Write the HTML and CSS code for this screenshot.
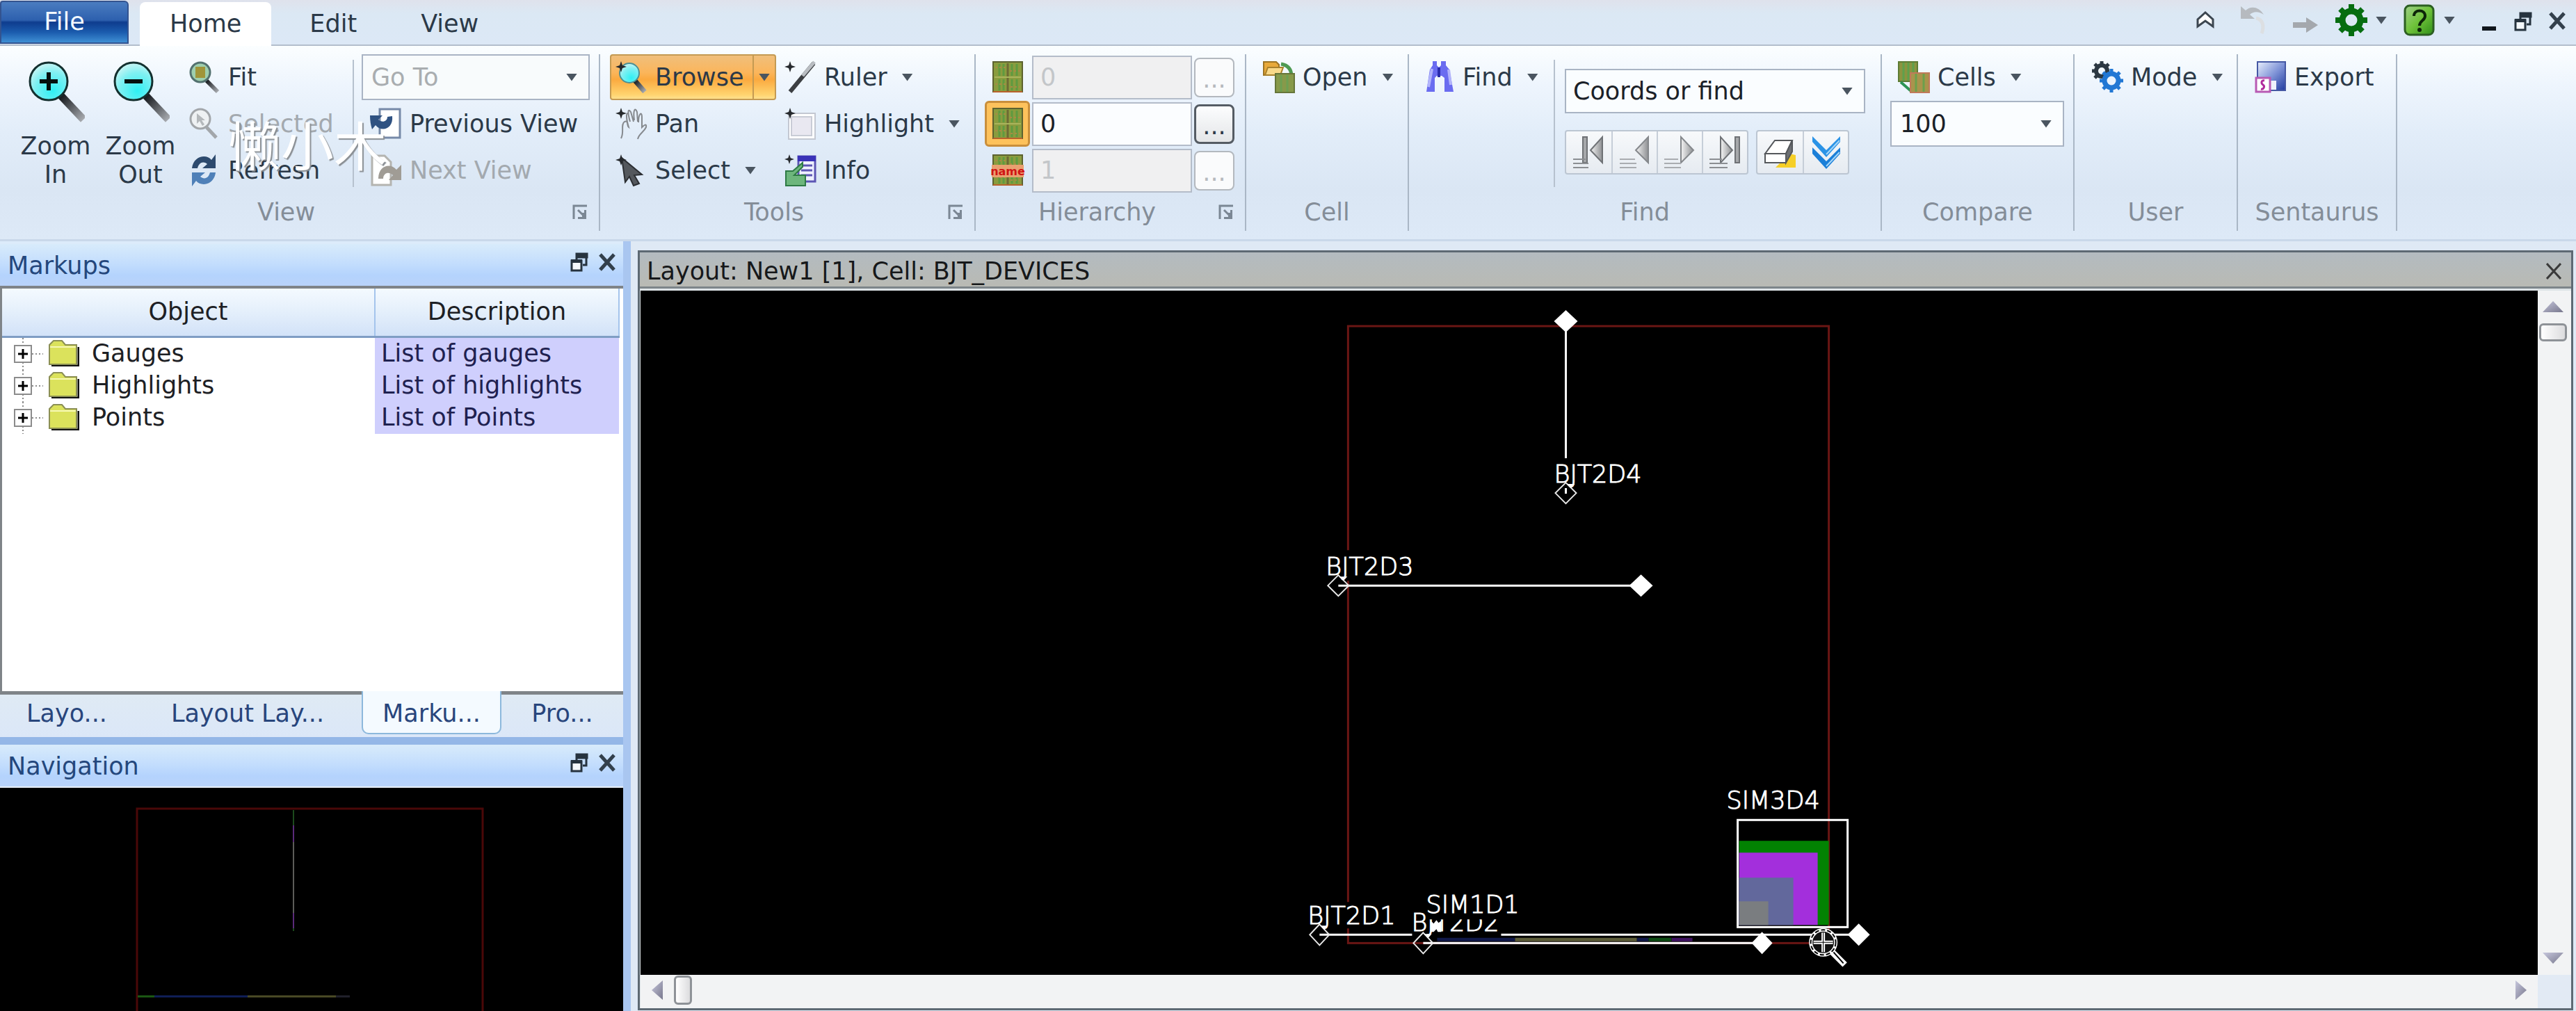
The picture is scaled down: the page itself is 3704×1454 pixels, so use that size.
FILE: index.html
```html
<!DOCTYPE html>
<html lang="en">
<head>
<meta charset="utf-8">
<title>Layout: New1 [1], Cell: BJT_DEVICES</title>
<link rel="stylesheet" href="styles.css">
</head>
<body>
<svg class="defs" aria-hidden="true">
  <defs>
    <radialGradient id="lens" cx="0.6" cy="0.75" r="0.8"><stop offset="0" stop-color="#2ff0f4"/><stop offset="0.6" stop-color="#7ff0f2"/><stop offset="1" stop-color="#d6f6f4"/></radialGradient>
    <linearGradient id="handle" x1="0" y1="0" x2="1" y2="1"><stop offset="0" stop-color="#15181c"/><stop offset="1" stop-color="#a8abb0"/></linearGradient>
    <linearGradient id="metal" x1="0" y1="0" x2="1" y2="0"><stop offset="0" stop-color="#f4f4f4"/><stop offset="1" stop-color="#8d8f92"/></linearGradient>
    <linearGradient id="disk" x1="0" y1="0" x2="1" y2="1"><stop offset="0" stop-color="#e8eefc"/><stop offset="0.5" stop-color="#8296d8"/><stop offset="1" stop-color="#1f3aa0"/></linearGradient>
    <linearGradient id="helpfill" x1="0" y1="0" x2="1" y2="1"><stop offset="0" stop-color="#9fd08a"/><stop offset="0.5" stop-color="#6fc23a"/><stop offset="1" stop-color="#2f8f18"/></linearGradient>
    <linearGradient id="scrollfill" x1="0" y1="0" x2="1" y2="1"><stop offset="0" stop-color="#c6c6dc"/><stop offset="1" stop-color="#77778c"/></linearGradient>
    <symbol id="star" viewBox="0 0 16 16"><path d="M8 0l2 6 6 2-6 2-2 6-2-6-6-2 6-2z" fill="#26292d"/></symbol>
    <symbol id="i-cell" viewBox="0 0 46 46">
      <rect x="2" y="1" width="42" height="43" fill="#8a9c3e" stroke="#5c6230" stroke-width="2"/>
      <path d="M11 4v17M17 4v17M29 4v17M36 4v17M11 26v16M17 26v16M29 26v16M36 26v16" stroke="#5f9a40" stroke-width="3"/>
      <path d="M23 3v40" stroke="#6d6a34" stroke-width="3"/><path d="M4 23h38" stroke="#a9b45c" stroke-width="2"/>
      <path d="M5 9h16M26 14h15M5 33h15M27 37h14" stroke="#a88a45" stroke-width="2" stroke-dasharray="3 3"/>
      <path d="M2 44h42" stroke="#b8622c" stroke-width="2"/>
    </symbol>
    <symbol id="i-restore" viewBox="0 0 26 28">
      <path d="M9 2h15v5H9zM9 7v3M23 7v11h-5" stroke="#26333f" stroke-width="3" fill="#26333f" fill-opacity="0"/>
      <path d="M8 1h17v6H8z" fill="#26333f"/><path d="M2 12h14v14H2z" fill="#f4f8fc" stroke="#26333f" stroke-width="3"/><path d="M1 10h16v5H1z" fill="#26333f"/>
    </symbol>
    <symbol id="i-close" viewBox="0 0 26 26"><path d="M3 2l20 22M23 2L3 24" stroke="#33404c" stroke-width="5"/></symbol>
    <symbol id="i-launch" viewBox="0 0 22 22"><path d="M2 21V2h19" stroke="#7b8794" stroke-width="3" fill="none"/><path d="M8 8l8 8" stroke="#7b8794" stroke-width="3"/><path d="M20 8v13H8v-3h6v-6h3V8z" fill="#7b8794"/></symbol>
    <symbol id="i-folder" viewBox="0 0 44 38">
      <path d="M4 37h39V10" fill="none" stroke="#111" stroke-width="3"/>
      <path d="M1 35V7l6-6h12l5 6h16v28z" fill="#dbe25c" stroke="#8b8f55" stroke-width="2"/>
      <path d="M2 10h37" stroke="#f6f8b4" stroke-width="2"/>
    </symbol>
    <symbol id="i-plus" viewBox="0 0 46 46"><path d="M17 0v46M30 23h16" stroke="#8c8c8c" stroke-width="2" stroke-dasharray="2 3"/><rect x="5" y="11" width="24" height="24" fill="#fff" stroke="#8c8c8c" stroke-width="2"/><path d="M10 23h14M17 16v14" stroke="#000" stroke-width="3"/></symbol>
  </defs>
</svg>

<header class="topbar">
  <button class="file-btn" type="button">File</button>
  <nav class="tabs" aria-label="Ribbon tabs">
    <button class="tab tab-active" type="button">Home</button>
    <button class="tab" type="button">Edit</button>
    <button class="tab" type="button">View</button>
  </nav>
  <div class="quick">
    <button class="icon-btn" type="button" aria-label="Collapse ribbon"><svg class="ico" viewBox="0 0 46 46"><path d="M12 32V22L23 12l11 10v10l-11-8z" fill="#fff" stroke="#3c4650" stroke-width="3"/></svg></button>
    <button class="icon-btn" type="button" aria-label="Undo"><svg class="ico" viewBox="0 0 46 46"><path d="M4 3v18h20l-7-6c6-6 14-4 20 0C30 3 18 2 11 9z" fill="#b6babf"/><path d="M26 20c10 2 12 12 8 22" fill="none" stroke="#dcdfe2" stroke-width="5"/></svg></button>
    <button class="icon-btn" type="button" aria-label="Redo"><svg class="ico" viewBox="0 0 46 46"><path d="M9 26h19v-7l17 11-17 11v-7H9z" fill="#a4a8ad"/></svg></button>
    <div class="quick-split">
      <button class="icon-btn" type="button" aria-label="Settings"><svg class="ico" viewBox="0 0 46 46"><circle cx="23" cy="23" r="13" fill="none" stroke="#066d10" stroke-width="9"/><path d="M23 0v10M23 36v10M0 23h10M36 23h10M7 7l7 7M32 32l7 7M39 7l-7 7M14 32l-7 7" stroke="#066d10" stroke-width="8"/></svg></button>
      <span class="arrow"></span>
    </div>
    <div class="quick-split">
      <button class="icon-btn" type="button" aria-label="Help"><svg class="ico" viewBox="0 0 46 46"><rect x="2" y="2" width="41" height="42" rx="7" fill="url(#helpfill)" stroke="#2c5f22" stroke-width="3"/><path d="M15 17c0-10 16-10 16 0 0 7-8 6-8 14" fill="none" stroke="#0d2609" stroke-width="4"/><circle cx="23" cy="37" r="3" fill="#0d2609"/></svg></button>
      <span class="arrow"></span>
    </div>
    <div class="win-controls">
      <button class="win-btn" type="button" aria-label="Minimize"><svg width="22" height="28" viewBox="0 0 22 28"><rect x="1" y="21" width="20" height="6" fill="#10161c"/></svg></button>
      <button class="win-btn" type="button" aria-label="Restore"><svg width="26" height="28"><use href="#i-restore"/></svg></button>
      <button class="win-btn" type="button" aria-label="Close"><svg width="26" height="26"><use href="#i-close"/></svg></button>
    </div>
  </div>
</header>

<section class="ribbon" aria-label="Home">
  <div class="group g-view">
    <div class="group-body">
      <button class="big-btn" type="button"><svg width="84" height="90" viewBox="0 0 84 90"><path d="M50 50l32 34" stroke="url(#handle)" stroke-width="11"/><circle cx="32" cy="29" r="27" fill="url(#lens)" stroke="#14302f" stroke-width="3"/><path d="M19 29h26M32 16v26" stroke="#06110f" stroke-width="6"/></svg><span>Zoom<br>In</span></button>
      <button class="big-btn" type="button"><svg width="84" height="90" viewBox="0 0 84 90"><path d="M50 50l32 34" stroke="url(#handle)" stroke-width="11"/><circle cx="32" cy="29" r="27" fill="url(#lens)" stroke="#14302f" stroke-width="3"/><path d="M19 29h26" stroke="#06110f" stroke-width="6"/></svg><span>Zoom<br>Out</span></button>
      <div class="col col-fit">
        <button class="btn" type="button"><svg class="ico" viewBox="0 0 46 46"><path d="M26 28l16 16" stroke="url(#handle)" stroke-width="6"/><circle cx="17" cy="16" r="14" fill="#9ecfae" stroke="#53716f" stroke-width="3"/><rect x="10" y="8" width="14" height="16" fill="#a0953a"/></svg>Fit</button>
        <button class="btn" type="button" disabled><svg class="ico" viewBox="0 0 46 46"><path d="M26 28l14 15" stroke="#a2a6aa" stroke-width="5"/><circle cx="17" cy="16" r="14" fill="#eef1f3" stroke="#a2a6aa" stroke-width="3"/><path d="M12 8v15l4-4 4 7 3-2-4-6h5z" fill="#b4b8bb"/></svg>Selected</button>
        <button class="btn" type="button"><svg class="ico" viewBox="0 0 46 46"><path d="M5 20C7 2 26-1 33 8l6-8v20H20l7-6c-6-5-12-2-14 6z" fill="#2d4a6e"/><path d="M39 26c-2 18-21 21-28 12l-6 8V26h19l-7 6c6 5 12 2 14-6z" fill="#4f80b8"/></svg>Refresh</button>
      </div>
      <div class="col col-history">
        <div class="combo"><select aria-label="Go To" disabled><option>Go To</option></select><span class="arrow"></span></div>
        <button class="btn" type="button"><svg class="ico" viewBox="0 0 46 46"><path d="M14 2h29v41H14z" fill="#fff" stroke="#7689a8" stroke-width="3"/><path d="M0 11h18l-6 6c5 5 13 3 13-4l7-1c2 18-15 24-24 13l-5 6C1 25 0 18 0 11z" fill="#2f5282"/></svg>Previous View</button>
        <button class="btn" type="button" disabled><svg class="ico" viewBox="0 0 46 46"><path d="M3 2h18l9 9v33H3z" fill="#fff" stroke="#b4b4b0" stroke-width="3"/><path d="M12 35c0-18 16-24 26-13l7-7v22H27l6-7c-6-6-14-3-14 5z" fill="#a09c95"/></svg>Next View</button>
      </div>
    </div>
    <div class="group-foot"><span>View</span><button class="launch" type="button" aria-label="View options"><svg width="22" height="22"><use href="#i-launch"/></svg></button></div>
  </div>

  <div class="group g-tools">
    <div class="group-body">
      <div class="col col-tools">
        <div class="split">
          <button class="btn split-main" type="button"><svg class="ico" viewBox="0 0 46 46"><path d="M28 28l14 16" stroke="url(#handle)" stroke-width="7"/><circle cx="20" cy="17" r="14" fill="url(#lens)" stroke="#4c8f94" stroke-width="2"/><use href="#star" width="16" height="16"/></svg>Browse</button>
          <button class="split-arrow" type="button" aria-label="Browse options"><span class="arrow"></span></button>
        </div>
        <button class="btn" type="button"><svg class="ico" viewBox="0 0 46 46"><g fill="none" stroke="#85898e" stroke-width="2"><path d="M8 44c5-9-1-20 5-24 6-3 3 6 6 8-3-10-5-22 0-20M21 20c-4-14-3-20 1-14l4 14M27 18c-2-14 1-20 4-12l1 14M33 21c0-13 5-16 5-8v15c3-3 7-6 6 0-4 8-10 9-12 17"/></g><use href="#star" width="16" height="16"/></svg>Pan</button>
        <button class="btn" type="button"><svg class="ico" viewBox="0 0 46 46"><path d="M9 5l29 24-11 1 7 12-8 3-6-13-6 8z" fill="#54585d" stroke="#2b2e32" stroke-width="2"/><use href="#star" width="16" height="16"/></svg>Select<span class="arrow"></span></button>
      </div>
      <div class="col">
        <button class="btn" type="button"><svg class="ico" viewBox="0 0 46 46"><path d="M8 44L42 3" stroke="#3c3f43" stroke-width="6"/><path d="M26 21L43 1" stroke="#b9bdc2" stroke-width="5"/><use href="#star" width="16" height="16"/></svg>Ruler<span class="arrow"></span></button>
        <button class="btn" type="button"><svg class="ico" viewBox="0 0 46 46"><path d="M6 8h38v37H6z" fill="#fff" stroke="#c3c8d2" stroke-width="2"/><path d="M10 13h29v27H10z" fill="#e9e8f1" stroke="#c9ccd6" stroke-width="2"/><use href="#star" width="16" height="16"/></svg>Highlight<span class="arrow"></span></button>
        <button class="btn" type="button"><svg class="ico" viewBox="0 0 46 46"><path d="M20 3h24v36H20z" fill="#eef0ff" stroke="#5d56b4" stroke-width="3"/><path d="M19 2h26v8H19z" fill="#3a32b8"/><path d="M24 16h16M24 23h16M24 30h16" stroke="#5d56b4" stroke-width="3"/><path d="M2 24h10l14-12v6L14 30h16v15H2z" fill="#6db67c" stroke="#2e7a45" stroke-width="2"/><use href="#star" width="14" height="14"/></svg>Info</button>
      </div>
    </div>
    <div class="group-foot"><span>Tools</span><button class="launch" type="button" aria-label="Tools options"><svg width="22" height="22"><use href="#i-launch"/></svg></button></div>
  </div>

  <div class="group g-hier">
    <div class="group-body">
      <div class="levels">
        <button class="toggle" type="button" aria-label="From level"><svg class="ico"><use href="#i-cell"/></svg></button>
        <input type="text" value="0" aria-label="From level value" disabled>
        <button class="dots" type="button" disabled>...</button>
        <button class="toggle toggle-on" type="button" aria-label="To level"><svg class="ico"><use href="#i-cell"/></svg></button>
        <input type="text" value="0" aria-label="To level value">
        <button class="dots" type="button">...</button>
        <button class="toggle" type="button" aria-label="Name level"><svg class="ico" viewBox="0 0 46 46"><use href="#i-cell"/><rect y="15" width="46" height="18" fill="#e9a070"/><text class="name-tag" x="23" y="30">name</text></svg></button>
        <input type="text" value="1" aria-label="Name level value" disabled>
        <button class="dots" type="button" disabled>...</button>
      </div>
    </div>
    <div class="group-foot"><span>Hierarchy</span><button class="launch" type="button" aria-label="Hierarchy options"><svg width="22" height="22"><use href="#i-launch"/></svg></button></div>
  </div>

  <div class="group g-cell">
    <div class="group-body">
      <div class="col"><button class="btn" type="button"><svg class="ico" viewBox="0 0 46 46"><path d="M1 1h18l4 4v15H1z" fill="#e8a93a" stroke="#9d7424" stroke-width="2"/><path d="M7 9h22l-4 11H3z" fill="#f9d98a" stroke="#a9812c" stroke-width="2"/><path d="M26 4c12 2 15 10 15 18" fill="none" stroke="#4e9a52" stroke-width="5"/><path d="M18 18h27v27H18z" fill="#87994a" stroke="#66763a" stroke-width="2"/><path d="M26 20v24M35 20v24" stroke="#6da052" stroke-width="3"/></svg>Open<span class="arrow"></span></button></div>
    </div>
    <div class="group-foot"><span>Cell</span></div>
  </div>

  <div class="group g-find">
    <div class="group-body">
      <div class="col col-find"><button class="btn" type="button"><svg class="ico" viewBox="0 0 46 46"><path d="M14 0h6v6l3 3 3-3V0h7v6l5 6 6 32H31V24l-4-3h-7l-3 3v20H5l5-32 4-6z" fill="#6a6cf0"/><path d="M13 11l-5 26M37 12l3 22" stroke="#b2b4fb" stroke-width="4"/><path d="M23 9v14" stroke="#2a2cae" stroke-width="4"/></svg>Find<span class="arrow"></span></button></div>
      <div class="col col-search">
        <div class="combo combo-search"><select aria-label="Coords or find"><option>Coords or find</option></select><span class="arrow"></span></div>
        <div class="stepper">
          <div class="step-set">
            <button class="step" type="button" aria-label="First"><svg width="50" height="50" viewBox="0 0 50 50"><path d="M44 3v37L27 22z" fill="url(#metal)" stroke="#6f7276" stroke-width="2"/><path d="M16 3h6v37h-6z" fill="#a6a8ab" stroke="#6f7276" stroke-width="2"/><path d="M2 35h18M2 41h22M2 47h22" stroke="#8b8e92" stroke-width="2"/></svg></button>
            <button class="step" type="button" aria-label="Previous"><svg width="50" height="50" viewBox="0 0 50 50"><path d="M44 3v37L26 22z" fill="url(#metal)" stroke="#85888c" stroke-width="2"/><path d="M3 35h22M3 41h24M3 47h24" stroke="#a9acb0" stroke-width="2"/></svg></button>
            <button class="step" type="button" aria-label="Next"><svg width="50" height="50" viewBox="0 0 50 50"><path d="M26 3v37l18-18z" fill="url(#metal)" stroke="#85888c" stroke-width="2"/><path d="M2 35h20M2 41h24M2 47h24" stroke="#a9acb0" stroke-width="2"/></svg></button>
            <button class="step" type="button" aria-label="Last"><svg width="50" height="50" viewBox="0 0 50 50"><path d="M18 3v37l17-18z" fill="url(#metal)" stroke="#6f7276" stroke-width="2"/><path d="M39 3h6v37h-6z" fill="#a6a8ab" stroke="#6f7276" stroke-width="2"/><path d="M2 35h18M2 41h26M2 47h26" stroke="#8b8e92" stroke-width="2"/></svg></button>
          </div>
          <div class="step-set">
            <button class="step" type="button" aria-label="Clear"><svg width="50" height="50" viewBox="0 0 50 50"><path d="M18 47h29V29l-9-2z" fill="#f6cf28"/><path d="M3 27L17 8h25L33 27z" fill="#fff" stroke="#55585c" stroke-width="2"/><path d="M42 8v16L33 40V27z" fill="#6d7074" stroke="#55585c" stroke-width="2"/><path d="M3 27h30v13H3z" fill="#fff" stroke="#55585c" stroke-width="2"/></svg></button>
            <button class="step" type="button" aria-label="Show results"><svg width="50" height="50" viewBox="0 0 50 50"><path d="M5 2l20 20L45 2v8L25 32 5 10z" fill="#2b93e6"/><path d="M5 18l20 20 20-20v9L25 49 5 27z" fill="#1b7fd8"/><path d="M44 8L25 28M44 25L25 45" stroke="#a6d6f8" stroke-width="2"/></svg></button>
          </div>
        </div>
      </div>
    </div>
    <div class="group-foot"><span>Find</span></div>
  </div>

  <div class="group g-compare">
    <div class="group-body">
      <div class="col">
        <button class="btn" type="button"><svg class="ico" viewBox="0 0 46 46"><path d="M1 1h27v28H1z" fill="#8b9440" stroke="#5d7c35" stroke-width="2"/><path d="M8 2v26M15 2v26M22 2v26" stroke="#5fa04c" stroke-width="3"/><path d="M4 30l16 14" stroke="#2d9455" stroke-width="4"/><path d="M18 17h27v28H18z" fill="#a8944c" stroke="#c0795a" stroke-width="2"/><path d="M26 18v26M37 18v26" stroke="#6ba04c" stroke-width="3"/></svg>Cells<span class="arrow"></span></button>
        <div class="combo combo-compare"><select aria-label="Compare count"><option>100</option></select><span class="arrow"></span></div>
      </div>
    </div>
    <div class="group-foot"><span>Compare</span></div>
  </div>

  <div class="group g-user">
    <div class="group-body">
      <div class="col"><button class="btn" type="button"><svg class="ico" viewBox="0 0 46 46"><circle cx="15" cy="14" r="8" fill="none" stroke="#2c3842" stroke-width="6"/><path d="M15 0v5M1 14h5M5 4l4 4M25 4l-4 4M5 24l4-4" stroke="#2c3842" stroke-width="5"/><circle cx="29" cy="28" r="10" fill="#eaf3fd" stroke="#2177d4" stroke-width="7"/><path d="M29 11v6M29 39v6M12 28h6M40 28h6M17 16l4 4M37 36l4 4M41 16l-4 4M21 36l-4 4" stroke="#2177d4" stroke-width="5"/></svg>Mode<span class="arrow"></span></button></div>
    </div>
    <div class="group-foot"><span>User</span></div>
  </div>

  <div class="group g-sentaurus">
    <div class="group-body">
      <div class="col"><button class="btn" type="button"><svg class="ico" viewBox="0 0 46 46"><path d="M4 1h40v41H4z" fill="url(#disk)" stroke="#4558a4" stroke-width="2"/><path d="M22 28h9v13h-9z" fill="#eef2fb"/><path d="M2 24h20v20H2z" fill="#fff" stroke="#b85ab4" stroke-width="3"/><path d="M14 28c-5-1-5 4-2 6s1 7-3 6" fill="none" stroke="#b02a9c" stroke-width="3"/></svg>Export</button></div>
    </div>
    <div class="group-foot"><span>Sentaurus</span></div>
  </div>
</section>

<main class="workspace">
  <aside class="dock">
    <section class="panel panel-markups">
      <div class="panel-title"><h2>Markups</h2>
        <div class="panel-btns"><button type="button" aria-label="Float"><svg width="26" height="28"><use href="#i-restore"/></svg></button><button type="button" aria-label="Close"><svg width="26" height="26"><use href="#i-close"/></svg></button></div>
      </div>
      <div class="tree">
        <table>
          <thead><tr><th class="c-object">Object</th><th>Description</th></tr></thead>
          <tbody>
            <tr><td><div class="node"><svg width="46" height="46"><use href="#i-plus"/></svg><svg class="folder" width="44" height="38"><use href="#i-folder"/></svg>Gauges</div></td><td class="desc">List of gauges</td></tr>
            <tr><td><div class="node"><svg width="46" height="46"><use href="#i-plus"/></svg><svg class="folder" width="44" height="38"><use href="#i-folder"/></svg>Highlights</div></td><td class="desc">List of highlights</td></tr>
            <tr><td><div class="node"><svg width="46" height="46"><use href="#i-plus"/></svg><svg class="folder" width="44" height="38"><use href="#i-folder"/></svg>Points</div></td><td class="desc">List of Points</td></tr>
          </tbody>
        </table>
      </div>
      <div class="dock-tabs">
        <button class="dock-tab" type="button">Layo...</button>
        <button class="dock-tab" type="button">Layout Lay...</button>
        <button class="dock-tab dock-tab-active" type="button">Marku...</button>
        <button class="dock-tab" type="button">Pro...</button>
      </div>
    </section>
    <section class="panel panel-nav">
      <div class="panel-title"><h2>Navigation</h2>
        <div class="panel-btns"><button type="button" aria-label="Float"><svg width="26" height="28"><use href="#i-restore"/></svg></button><button type="button" aria-label="Close"><svg width="26" height="26"><use href="#i-close"/></svg></button></div>
      </div>
      <svg class="overview">
        <path d="M197 400V30h497v370" fill="none" stroke="#4a0808" stroke-width="3"/>
        <path d="M422 32v22" stroke="#1c4a1c" stroke-width="2"/><path d="M422 54v24M422 180v22" stroke="#5a2a7a" stroke-width="2"/><path d="M422 78v102" stroke="#5c5c58" stroke-width="2"/><path d="M422 202v4" stroke="#1c4a1c" stroke-width="2"/>
        <path d="M198 300h24" stroke="#1c5a14" stroke-width="3"/><path d="M222 300h134" stroke="#10205a" stroke-width="3"/><path d="M356 300h127" stroke="#4c4c26" stroke-width="3"/><path d="M483 300h20" stroke="#22222c" stroke-width="3"/>
      </svg>
    </section>
  </aside>

  <section class="document">
    <div class="doc-title"><h1>Layout: New1 [1], Cell: BJT_DEVICES</h1><button type="button" aria-label="Close layout"><svg width="22" height="26" viewBox="0 0 22 26"><path d="M1 2l20 22M21 2L1 24" stroke="#3a3a3a" stroke-width="3"/></svg></button></div>
    <div class="doc-body">
      <svg class="canvas" viewBox="921 418 2727 983" preserveAspectRatio="xMinYMin">
        <rect x="1938" y="469" width="691" height="887" fill="none" stroke="#6a1614" stroke-width="3"/>
        <g>
          <path d="M2500 1209h129v121h-129z" fill="#028202"/><path d="M2500 1226h113v104h-113z" fill="#a32fdc"/><path d="M2500 1262h78v68h-78z" fill="#62689c"/><path d="M2500 1296h42v34h-42z" fill="#7a7d80"/>
          <rect x="2498" y="1179" width="158" height="154" fill="none" stroke="#fff" stroke-width="3"/>
        </g>
        <path d="M2066 1351h112M2353 1351h17" stroke="#101848" stroke-width="5"/><path d="M2178 1351h175" stroke="#5c5c38" stroke-width="5"/><path d="M2370 1351h33" stroke="#0c4a12" stroke-width="5"/><path d="M2403 1351h30" stroke="#3f1260" stroke-width="5"/>
        <g stroke="#fff" fill="none" stroke-width="3">
          <path d="M2251 463v196M2251 702v8"/>
          <path d="M1924 842h435"/>
          <path d="M1897 1344h133M2158 1344h514"/>
          <path d="M2046 1356h487"/>
        </g>
        <g class="mask"><path d="M2234 659h128v38h-128zM1907 791h126v44h-126zM1881 1297h124v38h-124zM2030 1311h130v30h-130z"/></g>
        <text class="mark" x="2234" y="694">BJT2D4</text>
        <text class="mark" x="1906" y="827">BJT2D3</text>
        <text class="mark" x="1880" y="1329">BJT2D1</text>
        <text class="mark" x="2029" y="1339">BJT2D2</text>
        <path class="mask" d="M2050 1280h132v42h-132z"/>
        <text class="mark" x="2050" y="1313">SIM1D1</text>
        <text class="mark" x="2482" y="1163">SIM3D4</text>
        <path d="M2057 1324l4 4 4-5 3 4 4-3v16h-5l-2-4-4 4h-4z" fill="#fff"/>
        <g fill="#fff"><path d="M2251 446l17 16-17 16-17-16zM2359 826l17 16-17 16-17-16zM2672 1328l16 16-16 16-16-16zM2533 1340l15 16-15 16-15-16z"/></g>
        <g fill="none" stroke="#e8e8e8" stroke-width="2"><path d="M2251 694l15 15-15 15-15-15zM1924 827l15 15-15 15-15-15zM1897 1329l14 15-14 15-14-15zM2046 1341l14 15-14 15-14-15z"/></g>
        <path d="M2252 696h12l-6 6zM1925 829h12l-6 6zM1898 1331h11l-5 6zM2047 1343h11l-5 6z" fill="#fff"/>
        <g fill="none">
          <path d="M2634 1369l18 18" stroke="#fff" stroke-width="9"/><path d="M2634 1367l16 18" stroke="#000" stroke-width="2"/>
          <circle cx="2621" cy="1355" r="18" fill="#111" stroke="#fff" stroke-width="5"/><circle cx="2621" cy="1355" r="18" stroke="#000" stroke-width="2" stroke-dasharray="6 3"/>
          <path d="M2607 1355h28M2621 1341v28" stroke="#fff" stroke-width="5"/><path d="M2607 1355h28M2621 1341v28" stroke="#000" stroke-width="1"/>
        </g>
      </svg>
      <div class="scroll scroll-v">
        <button type="button" aria-label="Scroll up"><svg width="30" height="16" viewBox="0 0 30 16"><path d="M15 0l15 16H0z" fill="url(#scrollfill)"/></svg></button>
        <div class="thumb"></div>
        <button class="scroll-end" type="button" aria-label="Scroll down"><svg width="30" height="16" viewBox="0 0 30 16"><path d="M0 0h30L15 16z" fill="url(#scrollfill)"/></svg></button>
      </div>
      <div class="scroll scroll-h">
        <button type="button" aria-label="Scroll left"><svg width="16" height="28" viewBox="0 0 16 28"><path d="M16 0v28L0 14z" fill="url(#scrollfill)"/></svg></button>
        <div class="thumb"></div>
        <button class="scroll-end" type="button" aria-label="Scroll right"><svg width="16" height="28" viewBox="0 0 16 28"><path d="M0 0v28l16-14z" fill="url(#scrollfill)"/></svg></button>
      </div>
      <div class="scroll-corner"></div>
    </div>
  </section>
</main>
<div class="watermark" lang="zh">懒小木</div>
</body>
</html>
```
FILE: styles.css
```css
* { box-sizing: border-box; }

body {
  margin: 0;
  min-height: 100vh;
  display: flex;
  flex-direction: column;
  position: relative;
  background: #dfe9f5;
  color: #2b3948;
  font-family: "DejaVu Sans", Verdana, sans-serif;
  font-size: 35px;
  line-height: 41px;
}

button, input, select {
  margin: 0;
  padding: 0;
  border: 0;
  background: none;
  font: inherit;
  color: inherit;
}

h1, h2 { margin: 0; font-size: inherit; font-weight: normal; }
svg { display: block; flex: none; }
.defs { position: absolute; width: 0; height: 0; }
.ico { width: 46px; height: 46px; overflow: visible; }

.arrow {
  width: 16px;
  height: 11px;
  background: #4a5560;
  clip-path: polygon(0 0, 100% 0, 50% 100%);
}

/* Top bar */
.topbar {
  display: flex;
  height: 66px;
  background: linear-gradient(#dfe2ec, #dbe8f4 30%, #dce8f6);
  border-bottom: 2px solid #b3becc;
}
.file-btn {
  width: 185px;
  height: 62px;
  margin-top: 1px;
  padding-bottom: 2px;
  border: 2px solid #33538f;
  border-radius: 4px 6px 0 0;
  background: linear-gradient(#4a7cc0, #2d60ae 45%, #0e3c8e 50%, #1b5cae 75%, #3f8fd4);
  color: #f2f8ff;
}
.tabs { display: flex; margin-left: 16px; }
.tab { padding: 4px 46px 0; }
.tab-active {
  margin: 3px 9px -2px 0;
  padding: 2px 43px 2px;
  border-radius: 8px 8px 0 0;
  background: #fff;
}
.quick {
  display: flex;
  align-items: flex-start;
  gap: 24px;
  margin-left: auto;
  padding: 6px 3px 0 0;
}
.icon-btn { width: 46px; height: 46px; }
.quick-split { display: flex; align-items: center; gap: 12px; }
.win-controls { display: flex; }
.win-btn { display: flex; justify-content: center; width: 49px; padding-top: 11px; }

/* Ribbon */
.ribbon {
  display: flex;
  padding: 12px 0;
  background: linear-gradient(#fbfeff, #eef5fd 20%, #e2edf9 45%, #dae6f4 75%, #dde9f7);
  border-bottom: 3px solid #c9d8ea;
}
.group {
  flex: none;
  display: flex;
  flex-direction: column;
  border-right: 2px solid #aab7c6;
}
.group-body { display: flex; height: 200px; }
.group-foot {
  display: flex;
  align-items: center;
  height: 54px;
  color: #848d98;
}
.group-foot span { flex: 1; text-align: center; }
.launch { width: 38px; }
.g-view { width: 863px; }
.g-tools { width: 540px; }
.g-hier { width: 389px; }
.g-cell { width: 234px; }
.g-find { width: 680px; }
.g-compare { width: 277px; }
.g-user { width: 235px; }
.g-sentaurus { width: 229px; }
.g-view .group-body { padding-left: 19px; }
.g-tools .group-body { padding-left: 14px; gap: 4px; }
.g-hier .group-body { padding-left: 13px; }
.g-cell .group-body, .g-user .group-body, .g-sentaurus .group-body { padding-left: 16px; }
.g-find .group-body, .g-compare .group-body { padding-left: 12px; }

.big-btn {
  display: flex;
  flex-direction: column;
  align-items: center;
  gap: 12px;
  width: 122px;
  padding-top: 10px;
}
.col { display: flex; flex-direction: column; gap: 1px; }
.btn {
  display: flex;
  align-items: center;
  gap: 11px;
  height: 66px;
  padding: 0 8px;
  white-space: nowrap;
}
.btn .arrow { margin-left: 10px; }
.btn:disabled { color: #a3a9af; }
.col-fit { width: 246px; }
.col-history { margin-left: 11px; width: 328px; }
.col-history .btn { padding-left: 12px; }
.col-tools { width: 239px; }

.split {
  display: flex;
  height: 66px;
  border: 2px solid #c49a52;
  border-radius: 4px;
  background: linear-gradient(#f0bf7c, #fbb55a 40%, #fba93f 55%, #ffd36e 90%, #ffe08c);
}
.split-main { flex: 1; height: 62px; padding: 0 6px; }
.split-arrow {
  display: flex;
  align-items: center;
  justify-content: center;
  width: 32px;
  border-left: 2px solid #c49a52;
}

.combo { display: grid; align-items: center; }
.combo > * { grid-area: 1 / 1; }
.combo select {
  appearance: none;
  width: 100%;
  height: 66px;
  padding: 0 12px;
  border: 2px solid #a9b4c4;
  background: #fafdff;
  color: #1b2128;
}
.combo select:disabled { color: #a9adb0; background: #f8fbfc; opacity: 1; }
.combo .arrow { justify-self: end; margin-right: 18px; pointer-events: none; }
.combo-compare { width: 250px; }
.g-compare .btn { padding-left: 11px; }
.combo-search select { height: 64px; padding: 0 10px; }

.levels {
  display: grid;
  grid-template-columns: 65px 230px 58px;
  grid-auto-rows: 66px;
  gap: 1px 3px;
  align-items: center;
}
.toggle { display: grid; place-items: center; height: 66px; border-radius: 6px; }
.toggle-on { border: 3px solid #c98f3c; background: #fdc25c; }
.levels input {
  width: 230px;
  height: 63px;
  padding: 0 10px;
  border: 2px solid #b4bcc9;
  background: #fbfdff;
  color: #1b2128;
}
.levels input:disabled { background: #f0f0f1; color: #c3c6c9; }
.dots {
  height: 57px;
  padding-top: 6px;
  border: 3px solid #555c64;
  border-radius: 8px;
  background: linear-gradient(#fcfdfe, #e4e6e8);
}
.dots:disabled { border: 2px solid #b3b8be; background: #fafbfc; color: #b5b9bd; }
.name-tag { font-size: 16px; font-weight: bold; fill: #d01414; text-anchor: middle; }

.col-find { width: 198px; }
.col-search { gap: 24px; width: 446px; padding: 21px 0 0 14px; }
.col-fit, .col-find {
  border: solid #b6c1ce;
  border-width: 0 2px 0 0;
  border-image: linear-gradient(#0000 9px, #b6c1ce 9px, #b6c1ce 190px, #0000 190px) 1;
}
.stepper { display: flex; gap: 11px; }
.step-set {
  display: flex;
  height: 64px;
  border: 2px solid #bcc6d2;
  border-radius: 4px;
  background: linear-gradient(#f7f9fb, #e6ebf1);
}
.step { display: grid; place-items: center; width: 65px; }
.step + .step { border-left: 2px solid #c6ced8; }

/* Workspace */
.workspace { flex: 1; display: flex; }
.dock {
  width: 907px;
  flex: none;
  display: flex;
  flex-direction: column;
  border-right: 11px solid #a9c6f0;
}
.panel { display: flex; flex-direction: column; }
.panel-markups { flex: 1; padding-top: 4px; border-bottom: 11px solid #94b7e7; background: #dcebfa; }
.panel-title {
  display: flex;
  align-items: center;
  justify-content: space-between;
  height: 60px;
  padding: 3px 10px 0 11px;
  background: linear-gradient(#d8ebfb, #c4defd 45%, #b4d3fd 75%, #b9d3fa);
  color: #24477c;
}
.panel-btns { display: flex; align-items: center; gap: 14px; padding-bottom: 12px; }
.tree {
  flex: 1;
  border: solid #7f8488;
  border-width: 4px 0 5px 3px;
  padding-right: 5px;
  background: #fff;
}
.tree table { width: 100%; border-collapse: collapse; table-layout: fixed; color: #1d2024; }
.tree th {
  height: 69px;
  padding: 0;
  border-bottom: 3px solid #7f9dc4;
  border-right: 2px solid #a4c4ec;
  background: linear-gradient(#f4faff, #e4effb 50%, #d2e2f8);
  font-weight: normal;
}
.c-object { width: 536px; }
.tree td { height: 46px; padding: 0; white-space: nowrap; }
.tree .desc { padding-left: 9px; background: #cfcffd; color: #1f2150; }
.node { display: flex; align-items: center; height: 46px; padding-left: 13px; }
.folder { margin: 0 18px 2px 8px; }
.dock-tabs {
  display: grid;
  grid-template-columns: 192px 328px 201px 1fr;
  align-items: start;
  height: 61px;
  background: linear-gradient(#dfeaf4, #dbe7f8);
  color: #28457c;
}
.dock-tab { height: 58px; padding: 0 0 4px; }
.dock-tab-active {
  margin-top: -5px;
  height: 62px;
  padding: 4px 0 0;
  border: 2px solid #8cb8dc;
  border-top: 0;
  border-radius: 0 0 10px 10px;
  background: #f4faff;
}
.panel-nav { flex: none; }
.overview { width: 100%; height: 323px; border-top: 2px solid #e8f0fa; background: #000; }

.document {
  flex: 1;
  display: flex;
  flex-direction: column;
  margin: 13px 4px 1px 10px;
  border: 3px solid #5d6973;
}
.doc-title {
  display: flex;
  align-items: center;
  justify-content: space-between;
  height: 52px;
  padding: 5px 14px 0 10px;
  border-bottom: 3px solid #7d858a;
  background: linear-gradient(#b3bbc0, #b9bab4);
  color: #16181a;
}
.doc-body {
  flex: 1;
  display: grid;
  grid-template: 1fr 48px / 1fr 48px;
  border: solid #dde3e6;
  border-width: 3px 0 0 1px;
}
.canvas { width: 100%; height: 100%; min-height: 0; background: #000; }
.mask { fill: #000; }
.mark { font-size: 35px; font-weight: 200; fill: #fff; stroke: #fff; stroke-width: 1px; }
.scroll { display: flex; align-items: center; background: #f2f3f4; }
.scroll-v { flex-direction: column; padding: 15px 4px 16px 0; }
.scroll-h { padding: 0 16px 4px; }
.scroll .scroll-end { margin: auto 0 0; }
.scroll-h .scroll-end { margin: 0 0 0 auto; }
.thumb { border: 3px solid #8e9297; border-radius: 6px; background: linear-gradient(90deg, #fff, #dcdcde); }
.scroll-v .thumb { width: 40px; height: 26px; margin-top: 16px; }
.scroll-h .thumb { width: 26px; height: 42px; margin-left: 16px; }
.scroll-corner { background: #e2eaf4; }

.watermark {
  position: absolute;
  left: 328px;
  top: 162px;
  color: #fff;
  font: 400 76px/88px "Noto Sans CJK SC", sans-serif;
  text-shadow: 2px 2px 1px #8a8f94;
  pointer-events: none;
}
```
